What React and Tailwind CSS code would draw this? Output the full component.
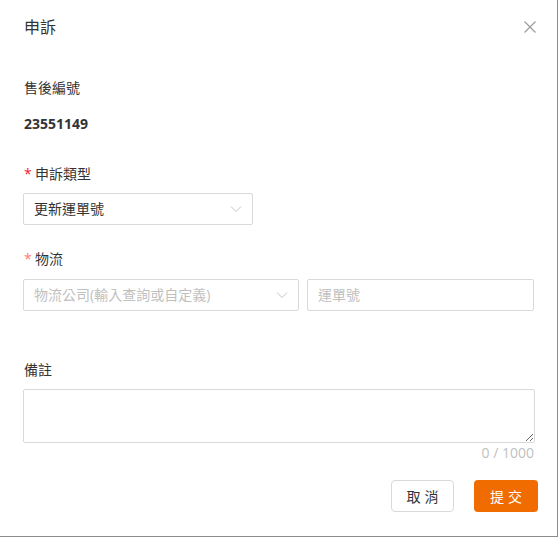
import React from "react";

const font = { fontFamily: '"Open Sans", "Noto Sans CJK TC", sans-serif' };

function Chevron() {
  return (
    <svg width="12" height="8" viewBox="0 0 12 8" fill="none">
      <path d="M1 1.5 L6 6.5 L11 1.5" stroke="#c4c4c4" strokeWidth="1" />
    </svg>
  );
}

export default function App() {
  return (
    <div className="w-[560px] h-[538px] bg-white" style={font}>
      <div className="w-[558px] h-[537px] bg-white border-r border-b border-[#8c8c8c] flex flex-col">
        <div className="flex items-center justify-between pl-[24px] pr-[21px] pt-[16px] h-[38px]">
          <span className="text-[16px] leading-[22px] text-[#333]">申訴</span>
          <svg width="12" height="12" viewBox="0 0 12 12" fill="none">
            <path d="M0.5 0.5 L11.5 11.5 M11.5 0.5 L0.5 11.5" stroke="#999" strokeWidth="1.1" />
          </svg>
        </div>
        <div className="px-[23px] flex flex-col text-[14px] leading-[20px] text-[#333]">
          <div className="mt-[40px] pl-[1px]">售後編號</div>
          <div className="mt-[16px] pl-[1px] font-bold">23551149</div>
          <div className="mt-[30px] flex items-center">
            <span className="text-[#f5222d] w-[12px] pl-[1px]">*</span>
            <span>申訴類型</span>
          </div>
          <div className="mt-[9px] w-[230px] h-[32px] border border-[#d9d9d9] rounded-[2px] flex items-center justify-between pl-[10px] pr-[10px]">
            <span className="text-[#333]">更新運單號</span>
            <Chevron />
          </div>
          <div className="mt-[24px] flex items-center">
            <span className="text-[#ff7875] w-[12px] pl-[1px]">*</span>
            <span>物流</span>
          </div>
          <div className="mt-[10px] flex gap-[8px]">
            <div className="w-[276px] h-[32px] border border-[#d9d9d9] rounded-[2px] flex items-center justify-between pl-[10px] pr-[10px]">
              <span className="text-[#bfbfbf]">物流公司(輸入查詢或自定義)</span>
              <Chevron />
            </div>
            <div className="flex-1 h-[32px] border border-[#d9d9d9] rounded-[2px] flex items-center pl-[10px]">
              <span className="text-[#bfbfbf]">運單號</span>
            </div>
          </div>
          <div className="mt-[49px] pl-[1px]">備註</div>
          <textarea className="mt-[9px] w-[512px] h-[54px] border border-[#d9d9d9] rounded-[2px] outline-none block" />
          <div className="text-right text-[#bfbfbf] h-[20px] leading-[20px]">0 / 1000</div>
        </div>
        <div className="flex justify-end gap-[20px] pr-[19px] mt-[17px]">
          <button className="w-[63px] h-[32px] border border-[#d9d9d9] rounded-[4px] bg-white text-[14px] text-[#333] tracking-[4px] pl-[4px]">取消</button>
          <button className="w-[64px] h-[32px] rounded-[4px] bg-[#f06c00] text-[14px] text-white tracking-[4px] pl-[4px]">提交</button>
        </div>
      </div>
    </div>
  );
}
